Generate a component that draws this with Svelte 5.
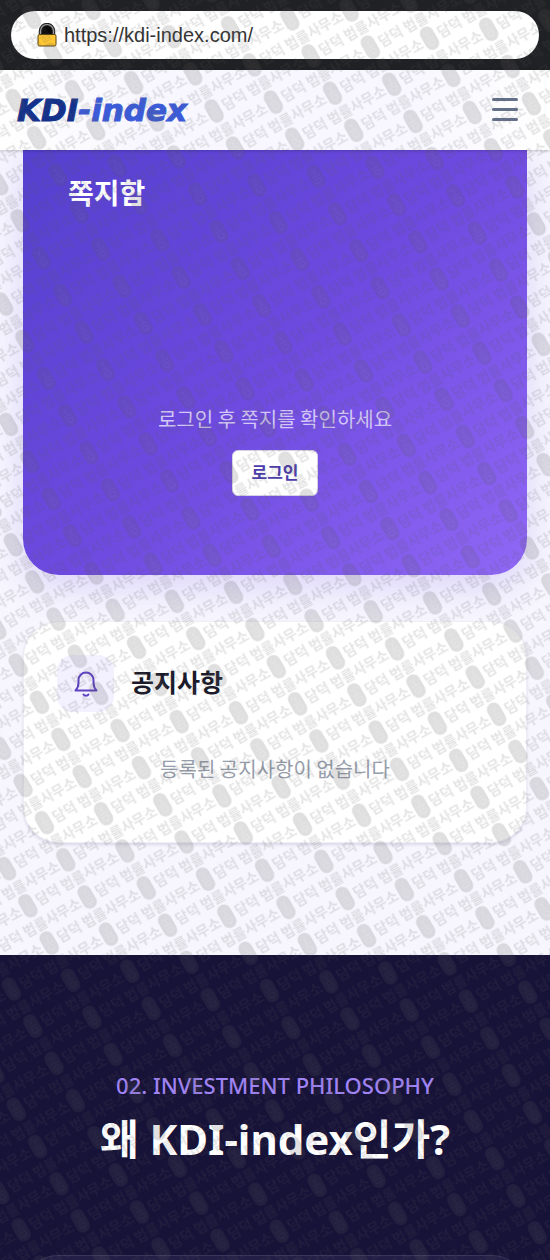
<script>
	let menuOpen = $state(false);
	let url = $state('https://kdi-index.com/');

	// staggered rows, repeated over the tile edges
	const marks = [
		[10, 10], [122, 10], [-102, 10],
		[66, 31.5], [-46, 31.5],
		[66, -11.5], [-46, -11.5],
		[10, 53], [-102, 53], [122, 53]
	];
</script>

<svelte:head>
	<title>KDI-index</title>
</svelte:head>

<div class="page">
	<div class="browser">
		<label class="address">
			<svg width="20" height="24" viewBox="0 0 20 24" aria-hidden="true">
				<path d="M3.5 12V8a6.5 6.5 0 0 1 13 0v4z" fill="#080808" />
				<path d="M3.5 12V8a6.5 6.5 0 0 1 13 0v4" fill="none" stroke="#222" stroke-width="3.4" />
				<path d="M3.5 12V8a6.5 6.5 0 0 1 13 0v4" fill="none" stroke="#a9a9a9" stroke-width="1.2" />
				<rect x="1" y="11.5" width="18" height="11.5" rx="1.5" fill="#ffc832" stroke="#5a4312" stroke-width="1" />
			</svg>
			<input type="text" aria-label="URL" bind:value={url} />
		</label>
	</div>

	<header>
		<a class="logo" href="/"><span>KDI</span>-index</a>
		<button class="menu" aria-label="메뉴" aria-expanded={menuOpen} onclick={() => (menuOpen = !menuOpen)}>
			<svg width="28" height="28" viewBox="0 0 28 28">
				<path d="M3.5 3.5h23M3.5 13.5h23M3.5 23.5h23" stroke="#64708a" stroke-width="3" stroke-linecap="round" />
			</svg>
		</button>
	</header>

	<main>
		<section class="messages">
			<h2>쪽지함</h2>
			<div class="login">
				<p>로그인 후 쪽지를 확인하세요</p>
				<button>로그인</button>
			</div>
		</section>

		<section class="notice">
			<div class="notice-head">
				<span class="bell">
					<svg width="28" height="28" viewBox="0 0 28 28" fill="none" stroke="#5f42c4" stroke-width="2" stroke-linecap="round" stroke-linejoin="round">
						<path d="M3.5 20.5h21c-2-2-3-4.5-3-8V10a7.5 7.5 0 0 0-15 0v2.500c0 3.500-1 6-3 8z" />
						<path d="M11.5 24.5c1 1.700 4 1.700 5 0" />
					</svg>
				</span>
				<h2>공지사항</h2>
			</div>
			<p>등록된 공지사항이 없습니다</p>
		</section>
	</main>

	<section class="philosophy">
		<p class="eyebrow">02. INVESTMENT PHILOSOPHY</p>
		<h1>왜 KDI-index인가?</h1>
		<div class="panel"></div>
	</section>

	<svg class="watermark" aria-hidden="true">
		<defs>
			<g id="mark">
				<rect x="-7" y="-12.5" width="14" height="25" rx="7" />
				<g fill="none" stroke="#fff" stroke-width="0.8" opacity="0.25">
					<path d="M-3-8l3 3 3-3M0-5v4M-4 0h8M-3 3h6v4h-6zM0 7v3" />
				</g>
				<text x="10" y="5">담덕 법률사무소</text>
			</g>
			<pattern id="marks" width="112" height="43" patternUnits="userSpaceOnUse" patternTransform="matrix(0.8663 -0.4906 0.4965 0.864 18.07 13.57)">
				{#each marks as [x, y]}
					<use href="#mark" {x} {y} />
				{/each}
			</pattern>
		</defs>
		<rect width="100%" height="100%" fill="url(#marks)" />
	</svg>
</div>

<style>
	:global(body) {
		margin: 0;
		background: #171238;
		font-family: "Noto Sans CJK KR", "Noto Sans", sans-serif;
	}

	.page {
		position: relative;
		height: 100vh;
		overflow: hidden;
		background: #f7f6fe;
	}

	h1, h2, p {
		margin: 0;
	}

	button {
		font-family: inherit;
		border: 0;
		cursor: pointer;
	}

	.browser {
		padding: 11px;
		background: #202124;
	}

	.address {
		display: flex;
		align-items: center;
		gap: 7px;
		height: 48px;
		padding: 0 26px;
		border-radius: 24px;
		background: #fff;
	}

	.address input {
		flex: 1;
		min-width: 0;
		padding: 0;
		border: 0;
		outline: 0;
		background: none;
		color: #333;
		font: 20px "Liberation Sans", Arial, sans-serif;
	}

	header {
		position: relative;
		display: flex;
		align-items: center;
		justify-content: space-between;
		height: 80px;
		padding: 0 32px 0 17px;
		background: linear-gradient(90deg, #fff, #f8f7ff 25%, #f8f7ff 75%, #fff);
		box-shadow: 0 1px 3px rgba(0, 0, 0, 0.2);
	}

	.logo {
		color: #3b5bd9;
		font: italic bold 31px "DejaVu Sans", Verdana, sans-serif;
		text-decoration: none;
		-webkit-text-stroke: 1px currentColor;
	}

	.logo span {
		color: #14328c;
	}

	.menu {
		display: flex;
		padding: 0;
		background: none;
	}

	main {
		display: flex;
		flex-direction: column;
		gap: 46px;
		padding: 0 23px 112px;
	}

	.messages {
		box-sizing: border-box;
		height: 425px;
		padding: 20px 45px;
		border-radius: 0 0 36px 36px;
		background: linear-gradient(135deg, #5440cf, #6e4ae0 50%, #9068f6);
		box-shadow: 0 12px 36px rgba(110, 74, 224, 0.2);
		color: #fff;
	}

	.messages h2 {
		font-size: 28px;
		line-height: 44px;
	}

	.login {
		display: flex;
		flex-direction: column;
		align-items: center;
		gap: 16px;
		margin-top: 190px;
	}

	.login p {
		color: #d3c8f6;
		font-size: 20px;
		line-height: 30px;
	}

	.login button {
		height: 46px;
		padding: 0 19px 4px;
		border: 1px solid #d6d2e4;
		border-radius: 6px;
		background: #fff;
		color: #4b3cae;
		font-size: 17px;
		font-weight: 600;
	}

	.notice {
		box-sizing: border-box;
		padding: 33px 33px 58px;
		border: 1px solid #efeef6;
		border-radius: 36px;
		background: #fff;
		box-shadow: 0 2px 3px rgba(30, 20, 80, 0.12);
	}

	.notice-head {
		display: flex;
		align-items: flex-start;
		gap: 17px;
	}

	.bell {
		display: grid;
		place-items: center;
		width: 57px;
		height: 57px;
		border-radius: 16px;
		background: #f3f0ff;
	}

	.notice h2 {
		color: #1a1a2b;
		font-size: 25px;
		line-height: 52px;
	}

	.notice p {
		margin-top: 42px;
		color: #969dab;
		font-size: 20px;
		line-height: 30px;
		text-align: center;
	}

	.philosophy {
		padding: 114px 22px 0;
		background: #171238;
		font-family: "Noto Sans", "Noto Sans CJK KR", sans-serif;
		text-align: center;
	}

	.eyebrow {
		color: #a084f5;
		font-size: 22px;
		font-weight: 500;
		line-height: 32px;
	}

	h1 {
		margin-top: 8px;
		color: #fff;
		font-size: 42px;
		line-height: 60px;
	}

	.panel {
		height: 300px;
		margin-top: 86px;
		border: 1px solid #39345a;
		border-radius: 36px;
		background: #231e46;
	}

	.watermark {
		position: absolute;
		inset: 0;
		width: 100%;
		height: 100%;
		fill: #5a5a5a;
		opacity: 0.19;
		pointer-events: none;
	}

	.watermark text {
		font: bold 14px "Noto Sans CJK KR", sans-serif;
		opacity: 0.85;
	}
</style>
